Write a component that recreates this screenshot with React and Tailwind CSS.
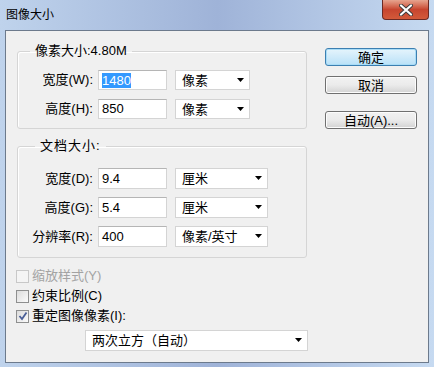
import React from 'react';

const font = "font-['Liberation_Sans','Noto_Sans_CJK_SC',sans-serif]";

const Arrow = () => (
  <svg width="8" height="5" viewBox="0 0 8 5" className="shrink-0">
    <path d="M0 0 H7 L3.5 4 Z" fill="#000" />
  </svg>
);

const Select = ({ value, w, h = 'h-[20px]' }) => (
  <div className={`${w} ${h} flex items-center justify-between bg-white border border-[#d4d4d4] pl-[6px] pr-[4px] text-[13px] leading-none`}>
    <span>{value}</span>
    <Arrow />
  </div>
);

const Field = ({ label, value, unit, selW, h, selected }) => (
  <div className={`flex items-center ${h}`}>
    <div className="w-[80px] text-right pr-[5px] text-[13px] whitespace-nowrap">{label}</div>
    <div className={`w-[69px] ${h} bg-white border border-[#d4d4d4] border-t-[#b5b5b5] flex items-center pl-[3px] text-[13px]`}>
      {selected ? <span className="bg-[#3399ff] text-white leading-[15px]">{value}</span> : <span>{value}</span>}
    </div>
    <div className="ml-[8px]">
      <Select value={unit} w={selW} h={h} />
    </div>
  </div>
);

const Check = ({ checked, disabled, label }) => (
  <div className="flex items-center h-[20px]">
    <div className={`w-[13px] h-[13px] border ${disabled ? 'border-[#c8c8c8] bg-[#f4f4f4]' : 'border-[#8e8f8f] bg-gradient-to-br from-[#dcdcdc] to-[#fbfbfb]'} flex items-center justify-center`}>
      {checked && (
        <svg width="10" height="10" viewBox="0 0 10 10">
          <path d="M1.5 5 L4 8 L8.5 1.5" stroke="#4a5f97" strokeWidth="1.8" fill="none" />
        </svg>
      )}
    </div>
    <span className={`ml-[3px] text-[13px] ${disabled ? 'text-[#a3a3a3]' : 'text-black'}`}>{label}</span>
  </div>
);

const Button = ({ children, primary }) => (
  <div
    className={`w-[92px] h-[18px] rounded-[3px] border flex items-center justify-center text-[13px] leading-none ${
      primary
        ? 'border-[#3c7fb1] bg-gradient-to-b from-[#e5f4fc] to-[#b9e1f8] shadow-[inset_0_0_0_1px_#a8dcf7]'
        : 'border-[#707070] bg-gradient-to-b from-[#f2f2f2] via-[#ebebeb] to-[#d3d3d3] shadow-[inset_0_0_0_1px_#fcfcfc]'
    }`}
  >
    {children}
  </div>
);

export default function App() {
  return (
    <div className={`w-[434px] h-[367px] overflow-hidden bg-gradient-to-r from-[#bfd3ec] via-[#9fb3d8] to-[#c6daf1] ${font} text-black`}>
      <div className="h-[30px] flex items-start justify-between">
        <div className="pl-[6px] pt-[7px] text-[12px] leading-[16px] text-black">图像大小</div>
        <div className="mr-[5px] w-[47px] h-[20px] rounded-b-[4px] border border-t-0 border-[#6b2a24] bg-gradient-to-b from-[#e6a48f] via-[#c7452f] to-[#d35a3a] flex items-center justify-center">
          <svg width="14" height="12" viewBox="0 0 14 12">
            <path d="M2 1.5 L12 10.5 M12 1.5 L2 10.5" stroke="#3b3b3b" strokeWidth="4" strokeLinecap="round" />
            <path d="M2 1.5 L12 10.5 M12 1.5 L2 10.5" stroke="#fff" strokeWidth="2.2" strokeLinecap="round" />
          </svg>
        </div>
      </div>
      <div className="ml-[5px] w-[424px] h-[333px] border border-[#6c7a8c] bg-[#f0f0f0] flex">
        <div className="pl-[11px] pt-[13px] w-[301px] shrink-0">
          <fieldset className="w-[290px] border border-[#d5d5d5] rounded-[3px] shadow-[inset_1px_1px_0_#fff] pl-[12px] pt-[12px] pb-[9px] pr-0">
            <legend className="px-[5px] text-[13px] leading-[14px]">像素大小:4.80M</legend>
            <div className="flex flex-col gap-[9px] -ml-[12px]">
              <Field label="宽度(W):" value="1480" unit="像素" selW="w-[75px]" h="h-[20px]" selected />
              <Field label="高度(H):" value="850" unit="像素" selW="w-[75px]" h="h-[20px]" />
            </div>
          </fieldset>
          <fieldset className="mt-[10px] w-[290px] border border-[#d5d5d5] rounded-[3px] shadow-[inset_1px_1px_0_#fff] pl-[17px] pt-[15px] pb-[10px] pr-0">
            <legend className="px-[5px] text-[13px] leading-[14px] tracking-[1px]">文档大小:</legend>
            <div className="flex flex-col gap-[8px] -ml-[17px]">
              <Field label="宽度(D):" value="9.4" unit="厘米" selW="w-[93px]" h="h-[21px]" />
              <Field label="高度(G):" value="5.4" unit="厘米" selW="w-[93px]" h="h-[21px]" />
              <Field label="分辨率(R):" value="400" unit="像素/英寸" selW="w-[93px]" h="h-[21px]" />
            </div>
          </fieldset>
          <div className="mt-[8px] -ml-[1px] flex flex-col">
            <Check disabled label="缩放样式(Y)" />
            <Check label="约束比例(C)" />
            <Check checked label="重定图像像素(I):" />
          </div>
          <div className="mt-[4px] ml-[68px]">
            <Select value="两次立方（自动）" w="w-[223px]" h="h-[21px]" />
          </div>
        </div>
        <div className="ml-[18px] mt-[17px] flex flex-col">
          <Button primary>确定</Button>
          <div className="mt-[10px]"><Button>取消</Button></div>
          <div className="mt-[17px]"><Button>自动(A)...</Button></div>
        </div>
      </div>
    </div>
  );
}
